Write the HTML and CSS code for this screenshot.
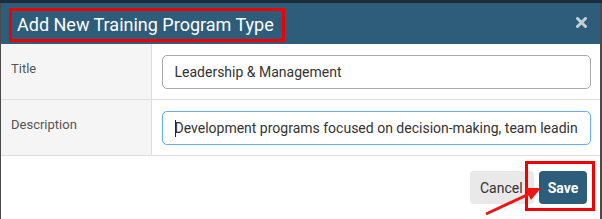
FILE: index.html
```html
<!DOCTYPE html>
<html lang="en">
<head>
  <meta charset="UTF-8" />
  <meta name="viewport" content="width=device-width, initial-scale=1" />
  <title>Add New Training Program Type</title>
  <link rel="stylesheet" href="styles.css">
</head>
<body>
  <div class="modal">
    <div class="modal-header">
      <span class="modal-title">Add New Training Program Type</span>
      <button class="close-btn" aria-label="Close">
        <svg width="11" height="11" viewBox="0 0 11 11">
          <path d="M1.5 1.5 L9.5 9.5 M9.5 1.5 L1.5 9.5" stroke="#c3d0d9" stroke-width="3" stroke-linecap="round" />
        </svg>
      </button>
    </div>

    <table class="form-table">
      <tr>
        <td class="label-cell">Title</td>
        <td class="field-cell">
          <input class="field" type="text" value="Leadership &amp; Management">
        </td>
      </tr>
      <tr>
        <td class="label-cell">Description</td>
        <td class="field-cell">
          <div class="field focused">
            <div class="field-text"><span class="caret"></span>Development programs focused on decision-making, team leadin</div>
          </div>
        </td>
      </tr>
    </table>

    <div class="modal-footer">
      <button class="btn btn-cancel">Cancel</button>
      <button class="btn btn-save">Save</button>
      <div class="mark-box"></div>
      <svg class="mark-arrow" width="70" height="40" viewBox="0 0 70 40">
        <line x1="3" y1="36" x2="46" y2="16" stroke="#f01414" stroke-width="3" />
        <polygon points="58,10 42,10 48,22" fill="#f01414" />
      </svg>
    </div>
  </div>
</body>
</html>
```

FILE: styles.css
```css
html, body {
  margin: 0;
  padding: 0;
  height: 100%;
}

body {
  background-color: #4a4a4a;
  font-family: Roboto, 'Liberation Sans', Arial, sans-serif;
  overflow: hidden;
  border-top: 3px solid #1c2e3b;
  box-sizing: border-box;
}

.modal {
  background: #ffffff;
  margin: 0 2px 0 1px;
  height: 100%;
}

.modal-header {
  background-color: #2d5d7b;
  height: 41px;
  box-sizing: border-box;
  padding: 5px 13px 2px 8px;
  display: flex;
  align-items: center;
  justify-content: space-between;
}

.modal-title {
  color: #ffffff;
  font-size: 18px;
  line-height: 28px;
  border: 3px solid #f00000;
  padding: 0 8px 0 5px;
}

.close-btn {
  background: none;
  border: 0;
  padding: 0;
  margin-top: -6px;
  width: 11px;
  height: 11px;
  display: flex;
}

.form-table {
  width: 100%;
  border-collapse: collapse;
  table-layout: fixed;
}

.form-table td {
  border-bottom: 1px solid #dddddd;
  vertical-align: top;
}

.label-cell {
  width: 150px;
  box-sizing: border-box;
  background: #f5f5f5;
  border-right: 1px solid #dddddd;
  padding: 16px 10px;
  font-size: 13px;
  line-height: 18px;
  color: #555555;
}

.field-cell {
  padding: 11px 9px 10px 10px;
}

.field {
  display: block;
  width: 100%;
  height: 34px;
  box-sizing: border-box;
  border: 1px solid #aaaaaa;
  border-radius: 5px;
  padding: 0 12px;
  font-family: inherit;
  font-size: 14px;
  line-height: 32px;
  color: #333333;
  outline: none;
}

.field.focused {
  border-color: #66afe9;
  box-shadow: 0 0 1px rgba(102, 175, 233, 0.6);
}

.field-text {
  white-space: nowrap;
  overflow: hidden;
}

.caret {
  display: inline-block;
  width: 1px;
  height: 17px;
  background: #222222;
  vertical-align: -4px;
  margin-right: -1px;
}

.modal-footer {
  position: relative;
  display: flex;
  justify-content: flex-end;
  gap: 5px;
  padding: 15px 13px 0 0;
}

.btn {
  height: 33px;
  border: 0;
  border-radius: 4px;
  font-family: inherit;
  font-size: 14px;
  padding: 0 10px;
}

.btn-cancel {
  background: #e9e9e9;
  color: #333333;
  width: 64px;
  text-align: left;
}

.btn-save {
  background: #2d5d7b;
  color: #ffffff;
  font-weight: bold;
  width: 48px;
  padding: 0;
}

.mark-box {
  position: absolute;
  right: 5px;
  top: 5px;
  width: 64px;
  height: 44px;
  border: 3px solid #f00000;
}

.mark-arrow {
  position: absolute;
  left: 482px;
  top: 22px;
}
```
